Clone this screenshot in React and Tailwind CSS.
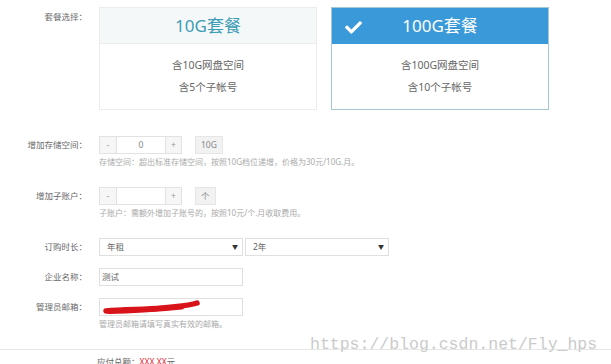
import React from 'react';
import { FaCheck } from 'react-icons/fa';

function Label({ children }) {
    return (
        <div className="w-[87px] shrink-0 text-right text-[8.5px] leading-[18px] text-[#6a6a6a]">
            {children}
        </div>
    );
}

function Stepper({ value, unit }) {
    return (
        <div className="flex items-center">
            <div className="flex h-[18px] text-[8.5px] text-[#999]">
                <div className="w-[18px] flex items-center justify-center border border-[#e2e2e2] bg-[#f6f6f6]">-</div>
                <div className="w-[48px] flex items-center justify-center border-y border-[#e2e2e2] bg-white text-[#888]">{value}</div>
                <div className="w-[17px] flex items-center justify-center border border-[#e2e2e2] bg-[#f6f6f6]">+</div>
            </div>
            <div className="ml-[13px] h-[18px] px-[5px] min-w-[17px] flex items-center justify-center border border-[#e6e6e6] bg-[#f2f2f2] text-[8.5px] text-[#888]">
                {unit}
            </div>
        </div>
    );
}

function Select({ value }) {
    return (
        <div className="w-[144px] h-[18px] flex items-center justify-between border border-[#e0e0e0] bg-white pl-[7px] pr-[4px] text-[8.5px] text-[#666]">
            <span>{value}</span>
            <span className="text-[6px] text-[#333]">▼</span>
        </div>
    );
}

function Help({ children }) {
    return <div className="mt-[2px] text-[8px] leading-[12px] text-[#aaa]">{children}</div>;
}

export default function App() {
    return (
        <div className="relative w-[611px] h-[364px] overflow-hidden bg-white font-['Noto_Sans','Noto_Sans_CJK_SC',sans-serif]">
            <div className="pt-[7px]">
                {/* plan cards */}
                <div className="flex">
                    <div className="w-[87px] shrink-0 text-right pt-[4px] text-[8.5px] leading-[12px] text-[#6a6a6a]">套餐选择：</div>
                    <div className="ml-[12px] flex gap-[14px]">
                        <div className="w-[218px] h-[103px] border border-[#ececec] bg-white flex flex-col">
                            <div className="h-[36px] bg-[#f5f8f9] border-b border-[#ececec] flex items-center justify-center text-[17px] text-[#3c9db5]">10G套餐</div>
                            <div className="flex-1 flex flex-col items-center pt-[10px] text-[10.5px] leading-[22px] text-[#666]">
                                <div>含10G网盘空间</div>
                                <div>含5个子帐号</div>
                            </div>
                        </div>
                        <div className="w-[218px] h-[103px] border border-[#a6c6d2] bg-white flex flex-col">
                            <div className="relative h-[36px] bg-[#3a99d8] flex items-center justify-center text-[17px] text-white">
                                <FaCheck className="absolute left-[13px] top-[11px] text-white" size={17} />
                                100G套餐
                            </div>
                            <div className="flex-1 flex flex-col items-center pt-[10px] text-[10.5px] leading-[22px] text-[#666]">
                                <div>含100G网盘空间</div>
                                <div>含10个子帐号</div>
                            </div>
                        </div>
                    </div>
                </div>

                {/* storage */}
                <div className="flex mt-[26px]">
                    <Label>增加存储空间：</Label>
                    <div className="ml-[12px]">
                        <Stepper value="0" unit="10G" />
                        <Help>存储空间：超出标准存储空间，按照10G档位递增，价格为30元/10G.月。</Help>
                    </div>
                </div>

                {/* sub accounts */}
                <div className="flex mt-[19px]">
                    <Label>增加子账户：</Label>
                    <div className="ml-[12px]">
                        <Stepper value="" unit="个" />
                        <Help>子账户：需额外增加子账号的，按照10元/个.月收取费用。</Help>
                    </div>
                </div>

                {/* duration */}
                <div className="flex mt-[19px]">
                    <Label>订购时长：</Label>
                    <div className="ml-[12px] flex gap-[2px]">
                        <Select value="年租" />
                        <Select value="2年" />
                    </div>
                </div>

                {/* company */}
                <div className="flex mt-[12px]">
                    <Label>企业名称：</Label>
                    <div className="ml-[12px] w-[144px] h-[18px] flex items-center border border-[#e0e0e0] pl-[2px] text-[8.5px] text-[#666]">测试</div>
                </div>

                {/* email */}
                <div className="flex mt-[12px]">
                    <Label>管理员邮箱：</Label>
                    <div className="ml-[12px]">
                        <div className="w-[144px] h-[18px] border border-[#e0e0e0]">
                            <svg width="144" height="18" viewBox="0 0 144 18">
                                <path d="M6 12 C 25 10, 45 11, 62 9 S 88 7, 97 4" stroke="#d8141a" strokeWidth="5.5" fill="none" strokeLinecap="round" />
                                <path d="M9 13 C 30 12.5, 55 11, 82 8.5" stroke="#d8141a" strokeWidth="4" fill="none" strokeLinecap="round" />
                            </svg>
                        </div>
                        <Help>管理员邮箱请填写真实有效的邮箱。</Help>
                    </div>
                </div>

                <div className="mt-[19px] border-t border-[#e6e6e6]" />
                <div className="mt-[6px] ml-[97px] text-[8.5px] leading-[12px] text-[#666]">
                    应付总额：<span className="text-[#e23]">XXX.XX</span>元
                </div>
            </div>

            <div className="absolute left-[310px] top-[336px] text-[16.5px] leading-[17px] text-[#cbcbcb] font-['Liberation_Mono',monospace] whitespace-nowrap">
                https://blog.csdn.net/Fly_hps
            </div>
        </div>
    );
}
